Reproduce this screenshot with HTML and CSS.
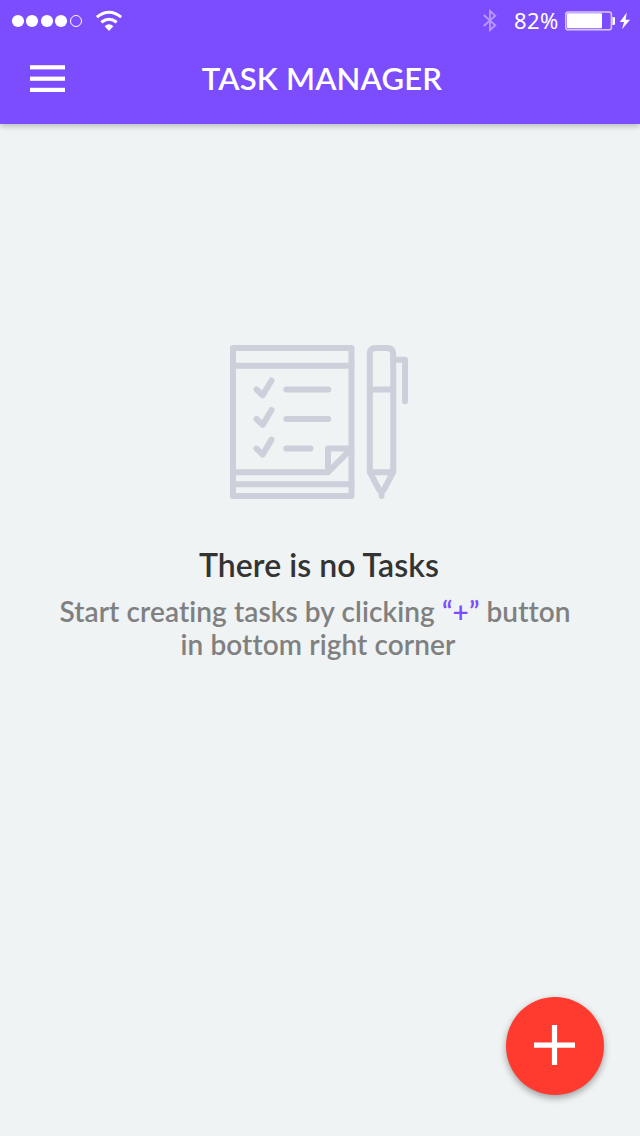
FILE: index.html
```html
<!DOCTYPE html>
<html lang="en">
<head>
<meta charset="utf-8">
<title>Task Manager</title>
<link rel="stylesheet" href="styles.css">
</head>
<body>
<div class="screen">
  <header class="header">
    <div class="status">
      <svg class="signal" width="124" height="42" viewBox="0 0 124 42" fill="#fff">
        <circle cx="18" cy="21" r="6.1"/><circle cx="32" cy="21" r="6.1"/><circle cx="47" cy="21" r="6.1"/><circle cx="61" cy="21" r="6.1"/>
        <circle cx="76" cy="21" r="5.5" fill="none" stroke="#fff"/>
        <g fill="none" stroke="#fff" stroke-width="3">
          <path d="M96.8 17.2Q109 7.4 121.2 17.2"/>
          <path d="M101.3 22.3Q109 16.2 116.7 22.3"/>
        </g>
        <path d="M104.6 26.2Q109 22.2 113.4 26.2L109 31Z"/>
      </svg>
      <div class="status-right">
        <svg class="bluetooth" width="16" height="24" viewBox="0 0 16 24" fill="none" stroke="#b596ff" stroke-width="1.9"><path d="M1.8 6L13.2 16.3L8 21V2L13.2 6.7L1.8 17"/></svg>
        <span class="percent">82%</span>
        <svg class="battery" width="66" height="22" viewBox="0 0 66 22">
          <rect x=".8" y="2" width="45.6" height="17.8" rx="2.4" fill="none" stroke="#d7c8ff" stroke-width="1.5"/>
          <rect x="2" y="3.2" width="35" height="15" rx="1" fill="#fff"/>
          <path d="M47.4 7h1.4q1.2 0 1.2 1v6q0 1-1.2 1h-1.4z" fill="#fff"/>
          <path d="M61.8 2.6L54.8 12h4.2L57 19.2L65 9.7H60.6Z" fill="#fff"/>
        </svg>
      </div>
    </div>
    <div class="bar">
      <svg class="menu" width="35" height="28" viewBox="0 0 35 28" fill="#fff"><rect y=".2" width="35" height="4.2"/><rect y="11.6" width="35" height="4.2"/><rect y="22.8" width="35" height="4.2"/></svg>
      <h1 class="title">TASK MANAGER</h1>
    </div>
  </header>
  <main class="empty">
    <svg class="art" width="180" height="156" viewBox="229 344 180 156" fill="none" stroke="#cdd0da" stroke-width="6" stroke-linejoin="round" stroke-linecap="round">
      <rect x="233" y="348" width="118.5" height="148"/>
      <path d="M233 365.8H351.5M233 484.3H351.5" />
      <path d="M233 472.2H328L351.5 448.6H328V472.2"/>
      <path d="M256.5 389.5L262.7 395.3L271.5 380.5M256.5 419L262.7 424.9L271.5 410M256.5 448.6L262.7 454.5L271.5 439.6"/>
      <path d="M286.3 389.5H328.3M286.3 419H328.3M286.3 448.6H310.5"/>
      <path d="M369.8 472.2V354Q369.8 348 376 348H387Q393.2 348 393.2 354V472.2L384 489.5Q381.5 493 379 489.5L369.8 472.2H393.2M369.8 389.5H393.2M381.5 491V496"/>
      <path d="M393.2 359.8H405V401.2"/>
    </svg>
    <h2 class="heading">There is no Tasks</h2>
    <p class="hint"><span class="hint-first">Start creating tasks by clicking <span class="plus">“+”</span> button</span><span class="hint-second">in bottom right corner</span></p>
  </main>
  <button class="fab" aria-label="Add task"><svg width="98" height="98" viewBox="0 0 98 98"><path d="M28 48.2H69M48.5 28V68" stroke="#fff" stroke-width="5.2"/></svg></button>
</div>
</body>
</html>
```
FILE: styles.css
```css
* { box-sizing: border-box; }
body { margin: 0; }
.screen {
  position: relative;
  width: 640px;
  height: 1136px;
  overflow: hidden;
  background: #eff3f4;
  font-family: Lato, sans-serif;
  font-variant-ligatures: none;
}
.header {
  height: 124px;
  background: #7c4dff;
  color: #fff;
  box-shadow: 0 2px 6px rgba(0, 0, 0, .25);
}
.status {
  display: flex;
  justify-content: space-between;
  height: 42px;
}
.signal { display: block; }
.status-right {
  display: flex;
  align-items: center;
  padding-right: 9px;
}
.bluetooth { margin-right: 16px; }
.percent {
  width: 51px;
  padding-bottom: 2px;
  font: 400 22px/40px "Noto Sans", sans-serif;
  letter-spacing: .4px;
}
.bar {
  display: grid;
  grid-template-columns: 65px 1fr 65px;
  align-items: center;
  height: 74px;
}
.menu { justify-self: end; }
.title {
  margin: 0;
  padding: 0 0 2px 4px;
  text-align: center;
  font-size: 31px;
  font-weight: 600;
  line-height: 40px;
  letter-spacing: .2px;
}
.empty {
  display: flex;
  flex-direction: column;
  align-items: center;
  padding-top: 220px;
  text-align: center;
}
.art { margin-right: 2px; }
.heading {
  margin: 45px 0 0;
  padding-right: 2px;
  color: #333;
  font-size: 32px;
  font-weight: 600;
  line-height: 40px;
  letter-spacing: .05px;
}
.hint {
  margin: 10px 0 0;
  color: #808080;
  font-size: 28px;
  font-weight: 600;
  line-height: 33px;
  letter-spacing: .1px;
}
.hint-first, .hint-second { display: block; white-space: nowrap; }
.hint-first { margin-right: 10px; }
.hint-second { margin-right: 4px; }
.plus { color: #7c4dff; }
.fab {
  position: absolute;
  left: 506px;
  top: 997px;
  width: 98px;
  height: 98px;
  padding: 0;
  border: 0;
  border-radius: 50%;
  background: #ff3b30;
  box-shadow: 0 3px 7px rgba(0, 0, 0, .35);
}
.fab svg { display: block; }
```
